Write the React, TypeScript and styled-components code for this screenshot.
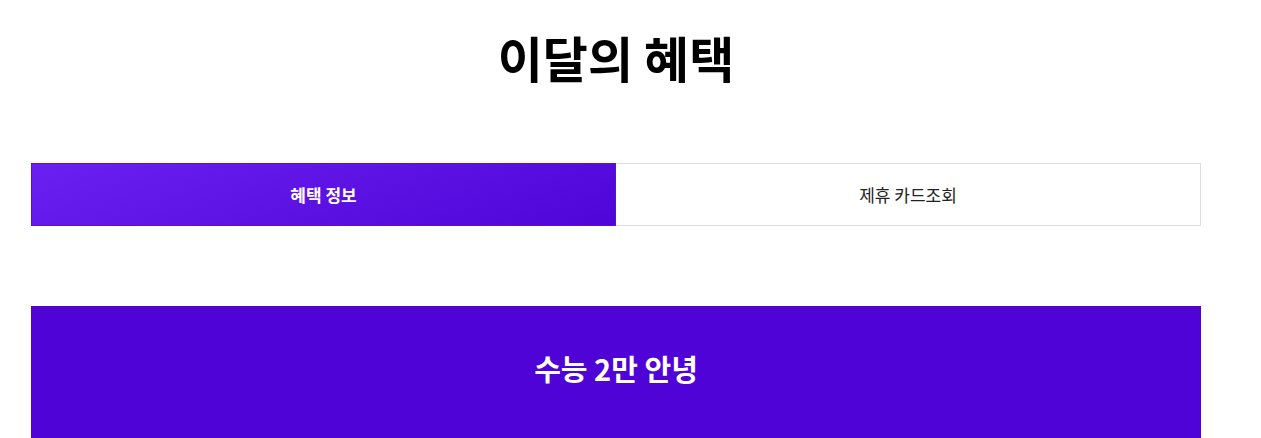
import styled, { createGlobalStyle } from "styled-components";

const GlobalStyle = createGlobalStyle`
  body {
    margin: 0;
    background: #fff;
    font-family: "Noto Sans CJK KR", "Noto Sans", sans-serif;
  }
`;

const tabs = [
  { id: "info", label: "혜택 정보", active: true },
  { id: "card", label: "제휴 카드조회", active: false },
];

export default function App() {
  return (
    <>
      <GlobalStyle />
      <Page>
        <Title>이달의 혜택</Title>
        <TabList>
          {tabs.map((tab) => (
            <Tab key={tab.id} $active={tab.active}>
              {tab.label}
            </Tab>
          ))}
        </TabList>
        <Banner>
          <BannerTitle>수능 2만 안녕</BannerTitle>
        </Banner>
      </Page>
    </>
  );
}

const Page = styled.main`
  width: 1170px;
  margin-left: 31px;
  padding-top: 21px;
`;

const Title = styled.h1`
  margin: 0;
  text-align: center;
  font-size: 49px;
  font-weight: 700;
  line-height: 72px;
  color: #000;
`;

const TabList = styled.div`
  display: grid;
  grid-template-columns: 1fr 1fr;
  margin-top: 70px;
`;

const Tab = styled.button<{ $active: boolean }>`
  height: 63px;
  border: 1px solid ${(p) => (p.$active ? "#5a0ee0" : "#dddddd")};
  border-left-width: ${(p) => (p.$active ? "1px" : "0")};
  background: ${(p) =>
    p.$active ? "linear-gradient(160deg, #6a20f0 0%, #5005d8 100%)" : "#fff"};
  color: ${(p) => (p.$active ? "#fff" : "#222")};
  font-family: inherit;
  font-size: 17px;
  font-weight: ${(p) => (p.$active ? 700 : 400)};
  cursor: pointer;
`;

const Banner = styled.section`
  margin-top: 80px;
  height: 140px;
  background: #5003d6;
  display: flex;
  justify-content: center;
  padding-top: 38px;
  box-sizing: border-box;
`;

const BannerTitle = styled.h2`
  margin: 0;
  font-size: 29px;
  font-weight: 700;
  line-height: 48px;
  color: #fff;
`;
